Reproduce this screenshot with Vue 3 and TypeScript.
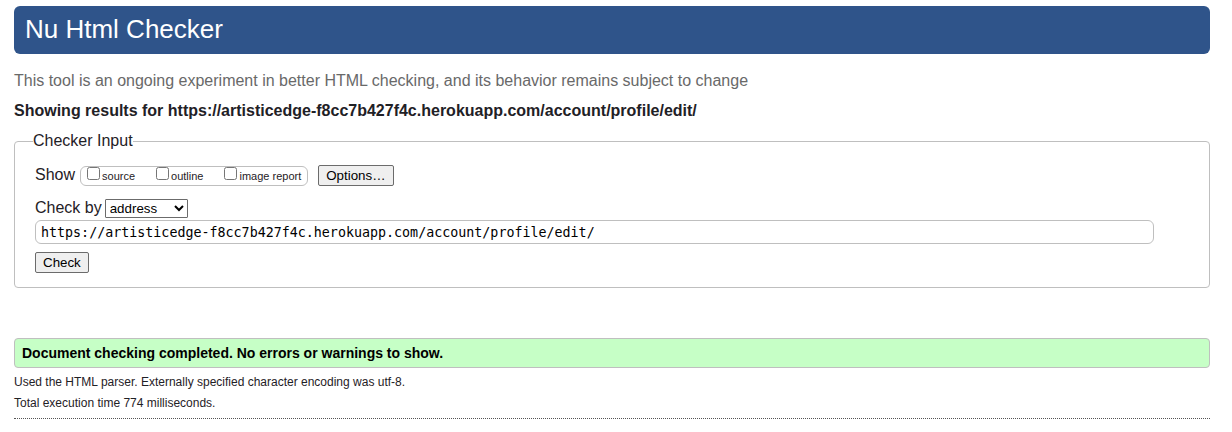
<script setup lang="ts">
import { ref } from 'vue'

interface ShowOption {
  id: string
  label: string
}

const showOptions: ShowOption[] = [
  { id: 'showsource', label: 'source' },
  { id: 'showoutline', label: 'outline' },
  { id: 'showimagereport', label: 'image report' },
]

const checked = ref<string[]>([])
const method = ref('address')
const address = ref('https://artisticedge-f8cc7b427f4c.herokuapp.com/account/profile/edit/')
const results = ref(address.value)

function check(): void {
  results.value = address.value
}
</script>

<template>
  <div class="page">
    <header class="banner">
      <h1>Nu Html Checker</h1>
    </header>
    <main>
      <p class="intro">This tool is an ongoing experiment in better HTML checking, and its behavior remains subject to change</p>
      <h2>Showing results for {{ results }}</h2>
      <form @submit.prevent="check">
        <fieldset>
          <legend>Checker Input</legend>
          <div class="body">
            <div class="row show-row">
              <span>Show</span>
              <div class="checks" role="group" aria-label="Show">
                <label v-for="option in showOptions" :key="option.id" :for="option.id">
                  <input :id="option.id" v-model="checked" type="checkbox" :value="option.id">
                  <span>{{ option.label }}</span>
                </label>
              </div>
              <button type="button" class="options">Options…</button>
            </div>
            <div class="row method-row">
              <label for="docselect">Check by</label>
              <select id="docselect" v-model="method">
                <option value="address">address</option>
                <option value="file">file upload</option>
                <option value="text">text input</option>
              </select>
            </div>
            <input id="doc" v-model="address" class="address" type="text" aria-label="Address" spellcheck="false">
            <button type="submit" class="submit">Check</button>
          </div>
        </fieldset>
      </form>
      <section class="results">
        <p class="success">Document checking completed. No errors or warnings to show.</p>
        <p class="detail">Used the HTML parser. Externally specified character encoding was utf-8.</p>
        <p class="detail">Total execution time 774 milliseconds.</p>
      </section>
    </main>
    <hr>
  </div>
</template>

<style>
body {
  background: #fff;
}
</style>

<style scoped>
.page {
  padding: 6px 22px 12px 14px;
  color: #1f2126;
  font-family: "Liberation Sans", Arial, sans-serif;
  font-size: 16px;
  line-height: 20px;
}

.banner {
  padding: 8px 11px 10px;
  border-radius: 6px;
  background: #2f548a;
  color: #fff;
}

h1 {
  margin: 0;
  font-size: 26px;
  font-weight: 400;
  line-height: 30px;
}

.intro {
  margin: 17px 0 10px;
  color: #696969;
}

h2 {
  margin: 0 0 10px;
  font-size: 16px;
  line-height: 20px;
}

fieldset {
  min-width: 0;
  margin: 0;
  padding: 14px 18px;
  border: 1px solid #bfbfbf;
  border-radius: 4px;
}

legend {
  padding: 0;
}

.body {
  display: flex;
  flex-direction: column;
  align-items: flex-start;
  padding: 0 2px;
}

.row {
  display: flex;
}

.show-row {
  align-items: flex-start;
  margin-bottom: 12px;
}

.checks {
  display: flex;
  box-sizing: border-box;
  height: 20px;
  margin: 1px 10px 0 5px;
  padding: 0 6px;
  gap: 21px;
  border: 1px solid #bfbfbf;
  border-radius: 6px;
}

.checks label {
  display: flex;
  align-items: flex-start;
  gap: 2px;
  font-size: 11px;
  line-height: 19px;
}

.checks input {
  width: 13px;
  height: 13px;
  margin: 0;
}

button,
select {
  box-sizing: border-box;
  border: 1px solid #6b6b6b;
  color: #000;
  font-family: inherit;
}

button {
  height: 21px;
  padding: 0 7px;
  border-radius: 2px;
  background: #efefef;
}

.method-row {
  align-items: center;
  gap: 3px;
  margin-bottom: 2px;
}

select {
  width: 83px;
  height: 19px;
  border-radius: 1px;
  background-color: #fff;
}

.address {
  box-sizing: border-box;
  width: 97%;
  height: 24px;
  margin: 0 0 8px;
  padding: 0 5px;
  border: 1px solid #bfbfbf;
  border-radius: 6px;
  color: #000;
  font-family: "DejaVu Sans Mono", monospace;
}

.results {
  margin-top: 50px;
}

.success {
  margin: 0 0 4px;
  padding: 4px 7px;
  border: 1px solid #bfbfbf;
  border-radius: 4px;
  background: #c6ffc6;
  color: #000;
  font-size: 14px;
  font-weight: 700;
}

.detail {
  margin: 0;
  font-size: 12px;
  line-height: 21px;
}

hr {
  margin: 4px 0 0;
  border: 0;
  border-top: 1px dotted #555;
}
</style>
